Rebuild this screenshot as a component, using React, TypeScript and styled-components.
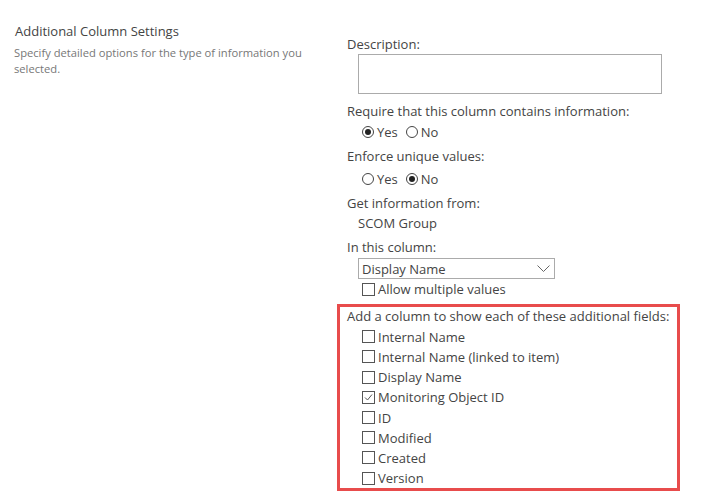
import React from "react";
import styled, { createGlobalStyle } from "styled-components";

const Global = createGlobalStyle`
  html, body { margin: 0; padding: 0; background: #fff; }
  body { font-family: "Segoe UI", "Open Sans", sans-serif; color: #444; }
`;

const Page = styled.div`
  display: flex;
  width: 702px;
  height: 499px;
  background: #fff;
`;

const SideCol = styled.div`
  width: 337px;
  flex: none;
  padding: 22px 0 0 14px;
  box-sizing: border-box;
`;

const SideTitle = styled.div`
  font-size: 13px;
  line-height: 18px;
  color: #444;
  padding-left: 1px;
`;

const SideText = styled.div`
  margin-top: 5px;
  font-size: 11.2px;
  line-height: 16px;
  color: #777;
  width: 300px;
`;

const MainCol = styled.div`
  width: 343px;
  flex: none;
  display: flex;
  flex-direction: column;
  padding-top: 34px;
`;

const Label = styled.div<{ $gap?: number }>`
  font-size: 13px;
  line-height: 20px;
  padding-left: 10px;
  margin-top: ${(p) => p.$gap ?? 0}px;
  color: #444;
  white-space: nowrap;
`;

const Value = styled(Label)`
  padding-left: 21px;
`;

const TextArea = styled.div`
  margin-left: 21px;
  width: 304px;
  height: 40px;
  box-sizing: border-box;
  border: 1px solid #ababab;
`;

const OptionRow = styled.div<{ $gap?: number }>`
  display: flex;
  align-items: center;
  gap: 8px;
  height: 20px;
  padding-left: 25px;
  margin-top: ${(p) => p.$gap ?? 0}px;
`;

const Option = styled.label`
  display: flex;
  align-items: center;
  gap: 3px;
  font-size: 13px;
  color: #444;
`;

const RadioDot = styled.span<{ $on?: boolean }>`
  width: 12px;
  height: 12px;
  border-radius: 50%;
  border: 1px solid #444;
  box-sizing: border-box;
  display: flex;
  align-items: center;
  justify-content: center;
  &::after {
    content: "";
    width: 6px;
    height: 6px;
    border-radius: 50%;
    background: ${(p) => (p.$on ? "#222" : "transparent")};
  }
`;

const Select = styled.div`
  margin: 1px 0 0 21px;
  width: 197px;
  height: 21px;
  box-sizing: border-box;
  border: 1px solid #ababab;
  display: flex;
  align-items: center;
  justify-content: space-between;
  padding: 0 4px 0 3px;
  font-size: 13px;
  color: #444;
`;

const CheckRow = styled.div<{ $indent?: number }>`
  display: flex;
  align-items: center;
  gap: 3px;
  height: 20.2px;
  flex: none;
  padding-left: ${(p) => p.$indent ?? 25}px;
  font-size: 13px;
  color: #444;
  white-space: nowrap;
`;

const Box = styled.span`
  width: 13px;
  height: 13px;
  box-sizing: border-box;
  border: 1px solid #555;
  background: #fff;
  display: flex;
  align-items: center;
  justify-content: center;
  flex: none;
`;

const Highlight = styled.div`
  margin-top: 5px;
  width: 343px;
  box-sizing: border-box;
  border: 3px solid #e84c4c;
  padding: 0 0 0 7px;
  display: flex;
  flex-direction: column;
`;

const BoxLabel = styled.div`
  font-size: 13px;
  line-height: 18px;
  padding-bottom: 1.5px;
  color: #444;
  white-space: nowrap;
`;

const Check = () => (
  <svg width="11" height="11" viewBox="0 0 11 11">
    <path d="M2 5.5 L4.5 8 L9 2.5" fill="none" stroke="#555" strokeWidth="1" />
  </svg>
);

const Chevron = () => (
  <svg width="13" height="7" viewBox="0 0 13 7">
    <path d="M0.5 0.5 L6.5 6.5 L12.5 0.5" fill="none" stroke="#666" strokeWidth="1" />
  </svg>
);

const Radio = ({ on, label }: { on?: boolean; label: string }) => (
  <Option>
    <RadioDot $on={on} />
    {label}
  </Option>
);

const fields: { name: string; checked?: boolean }[] = [
  { name: "Internal Name" },
  { name: "Internal Name (linked to item)" },
  { name: "Display Name" },
  { name: "Monitoring Object ID", checked: true },
  { name: "ID" },
  { name: "Modified" },
  { name: "Created" },
  { name: "Version" },
];

export default function App() {
  return (
    <Page>
      <Global />
      <SideCol>
        <SideTitle>Additional Column Settings</SideTitle>
        <SideText>Specify detailed options for the type of information you selected.</SideText>
      </SideCol>
      <MainCol>
        <Label>Description:</Label>
        <TextArea />
        <Label $gap={7}>Require that this column contains information:</Label>
        <OptionRow $gap={1}>
          <Radio on label="Yes" />
          <Radio label="No" />
        </OptionRow>
        <Label $gap={4}>Enforce unique values:</Label>
        <OptionRow $gap={3}>
          <Radio label="Yes" />
          <Radio on label="No" />
        </OptionRow>
        <Label $gap={4}>Get information from:</Label>
        <Value>SCOM Group</Value>
        <Label $gap={4}>In this column:</Label>
        <Select>
          <span>Display Name</span>
          <Chevron />
        </Select>
        <CheckRow>
          <Box />
          Allow multiple values
        </CheckRow>
        <Highlight>
          <BoxLabel>Add a column to show each of these additional fields:</BoxLabel>
          {fields.map((f) => (
            <CheckRow key={f.name} $indent={15}>
              <Box>{f.checked && <Check />}</Box>
              {f.name}
            </CheckRow>
          ))}
        </Highlight>
      </MainCol>
    </Page>
  );
}
